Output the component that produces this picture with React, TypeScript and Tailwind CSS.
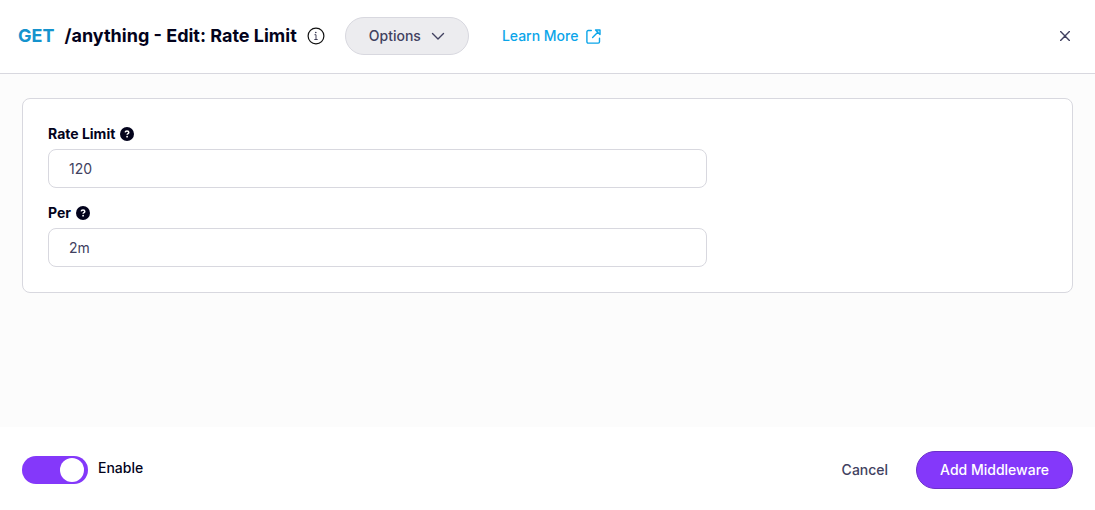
import { useState } from "react";

function InfoIcon() {
  return (
    <svg viewBox="0 0 18 18" className="size-[18px]" fill="none" aria-hidden="true">
      <circle cx="9" cy="9" r="7.900" stroke="#111" strokeWidth="1.200" />
      <circle cx="8.800" cy="5.500" r="0.800" fill="#2f2f4a" />
      <path d="M7.500 7.700h1.500v4.800M7.300 12.500h3.400" stroke="#2f2f4a" strokeWidth="0.900" />
    </svg>
  );
}

function HelpIcon() {
  return (
    <svg viewBox="0 0 14 14" className="size-3.5" fill="none" aria-hidden="true">
      <circle cx="7" cy="7" r="7" fill="#03031c" />
      <path
        d="M5.200 5.400C5.300 4.500 6 4.100 7 4.100s1.800.5 1.800 1.300c0 1.200-1.700 1.100-1.700 2.400"
        stroke="#fff"
        strokeWidth="1.500"
      />
      <circle cx="7.100" cy="9.700" r="0.900" fill="#fff" />
    </svg>
  );
}

function Field({ id, label, initial }: { id: string; label: string; initial: string }) {
  const [value, setValue] = useState(initial);
  return (
    <div>
      <label htmlFor={id} className="flex h-5 items-center gap-[5px] text-sm font-bold text-[#03031c]">
        {label}
        <HelpIcon />
      </label>
      <input
        id={id}
        type="text"
        value={value}
        onChange={(e) => setValue(e.target.value)}
        className="mt-[5px] block h-[39px] w-[66%] rounded-lg border border-[#d8d8df] bg-white px-5 text-sm text-[#414160] outline-none"
      />
    </div>
  );
}

export default function App() {
  const [enabled, setEnabled] = useState(true);
  return (
    <div className="flex min-h-screen flex-col bg-white font-['Inter',sans-serif] text-sm text-[#03031c]">
      <header className="flex items-center border-b border-[#d8d8df] pt-[17px] pr-[22px] pb-[18px] pl-[18px]">
        <h1 className="flex items-center gap-2.5 text-lg font-bold">
          <span className="text-[#1593cd]">GET</span>
          <span>/anything - Edit: Rate Limit</span>
        </h1>
        <button type="button" aria-label="Information" className="ml-2.5">
          <InfoIcon />
        </button>
        <button
          type="button"
          className="ml-5 flex h-[38px] items-center gap-2.5 rounded-full border border-[#d8d8df] bg-[#ececef] px-[23px] font-medium text-[#414160]"
        >
          Options
          <svg viewBox="0 0 14 14" className="size-3.5" fill="none" stroke="#414160" strokeWidth="1.400" strokeLinecap="round" strokeLinejoin="round" aria-hidden="true">
            <path d="M1.500 4.500 7 10l5.500-5.500" />
          </svg>
        </button>
        <a href="#learn-more" className="ml-[33px] flex items-center gap-2 font-medium text-[#0ba5e9]">
          Learn More
          <svg viewBox="0 0 15 15" className="size-[15px]" fill="none" stroke="#0ba5e9" strokeWidth="1.400" strokeLinecap="round" strokeLinejoin="round" aria-hidden="true">
            <path d="M5.300 1.500H2.200a1.300 1.300 0 0 0-1.300 1.300v10a1.300 1.300 0 0 0 1.300 1.300h10a1.300 1.300 0 0 0 1.300-1.300V9.200M6.600 8.400 12 3M9.500 1H14v4.500Z" />
          </svg>
        </a>
        <button type="button" aria-label="Close" className="ml-auto flex size-4 items-center justify-center">
          <svg viewBox="0 0 10 10" className="size-2.5" fill="none" stroke="#414160" strokeWidth="1.400" strokeLinecap="round" aria-hidden="true">
            <path d="m.6.6 8.800 8.800M9.400.6.6 9.400" />
          </svg>
        </button>
      </header>

      <main className="grow bg-[#fcfcfc] px-[22px] py-6">
        <section className="flex flex-col gap-[15px] rounded-lg border border-[#d8d8df] bg-white p-[25px]">
          <Field id="rate" label="Rate Limit" initial="120" />
          <Field id="per" label="Per" initial="2m" />
        </section>
      </main>

      <footer className="flex items-center justify-between px-[22px] pt-6 pb-[21px]">
        <label className="flex cursor-pointer items-center gap-2.5 font-medium">
          <input
            type="checkbox"
            role="switch"
            checked={enabled}
            onChange={(e) => setEnabled(e.target.checked)}
            className="flex h-7 w-[66px] cursor-pointer appearance-none items-center rounded-full bg-[#c4c4cf] px-1 before:size-6 before:rounded-full before:bg-white checked:justify-end checked:bg-[#8438fa]"
          />
          <span className="pb-1">Enable</span>
        </label>
        <div className="flex items-center gap-7">
          <button type="button" className="font-medium text-[#414160]">
            Cancel
          </button>
          <button
            type="button"
            className="h-[38px] rounded-full border border-[#6b2fc9] bg-[#8438fa] px-[23px] font-medium text-white"
          >
            Add Middleware
          </button>
        </div>
      </footer>
    </div>
  );
}
